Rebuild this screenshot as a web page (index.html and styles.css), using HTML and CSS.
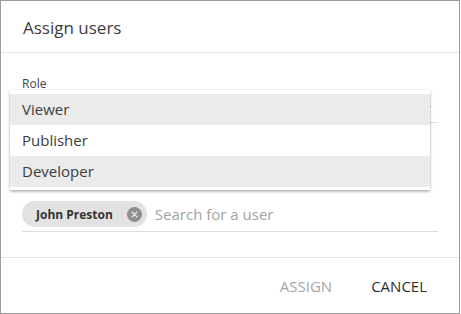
FILE: index.html
```html
<!DOCTYPE html>
<html lang="en">
<head>
  <meta charset="UTF-8" />
  <title>Assign users</title>
  <link rel="stylesheet" href="styles.css">
</head>
<body>
  <div class="dialog">
    <div class="dialog-header">
      <h2 class="dialog-title">Assign users</h2>
    </div>

    <div class="dialog-body">
      <div class="field">
        <label class="field-label">Role</label>
        <div class="select">
          <span class="select-arrow"></span>
        </div>

        <!-- open role menu -->
        <ul class="menu">
          <li class="menu-item active">Viewer</li>
          <li class="menu-item">Publisher</li>
          <li class="menu-item active">Developer</li>
        </ul>
      </div>

      <div class="chip-input">
        <span class="chip">
          John Preston
          <svg class="chip-close" width="15" height="15" viewBox="0 0 15 15">
            <circle cx="7.5" cy="7.5" r="7.5" fill="#8f8f8f"/>
            <path d="M5 5 L10 10 M10 5 L5 10" stroke="#e6e6e6" stroke-width="1.3" stroke-linecap="round"/>
          </svg>
        </span>
        <span class="search-placeholder">Search for a user</span>
      </div>
    </div>

    <div class="dialog-footer">
      <button class="btn btn-disabled">Assign</button>
      <button class="btn">Cancel</button>
    </div>
  </div>
</body>
</html>
```

FILE: styles.css
```css
body {
  font-family: "Open Sans", "Noto Sans", sans-serif;
  background: #ffffff;
  margin: 0;
  padding: 0;
}
.dialog {
  width: 458px;
  height: 312px;
  background: #ffffff;
  border: 1px solid #9c9c9c;
  display: flex;
  flex-direction: column;
}
.dialog-header {
  height: 52px;
  padding: 15px 22px 0;
  box-sizing: border-box;
  border-bottom: 1px solid #e4e4e4;
}
.dialog-title {
  margin: 0;
  font-size: 17px;
  line-height: 23px;
  font-weight: 400;
  color: #3d3d3d;
}
.dialog-body {
  padding: 0 21px 0 21px;
}
.field {
  position: relative;
  margin-top: 23px;
}
.field-label {
  display: block;
  font-size: 12px;
  line-height: 16px;
  color: #444;
}
.select {
  position: relative;
  height: 30px;
  border-bottom: 1px solid #dcdcdc;
}
.select-arrow {
  position: absolute;
  right: 7px;
  top: 14px;
  border-left: 5px solid transparent;
  border-right: 5px solid transparent;
  border-top: 5px solid #666;
}
.menu {
  position: absolute;
  top: 14px;
  left: -12px;
  width: 420px;
  margin: 0;
  padding: 4px 0 3px;
  list-style: none;
  background: #ffffff;
  box-shadow: 0 1px 3px rgba(0,0,0,0.25), 0 2px 2px rgba(0,0,0,0.12);
}
.menu-item {
  height: 31px;
  line-height: 31px;
  padding-left: 12px;
  font-size: 15px;
  color: #3d3d3d;
}
.menu-item.active {
  background: #ebebeb;
}
.chip-input {
  display: flex;
  align-items: center;
  gap: 8px;
  margin-top: 75px;
  padding: 3px 0 4px;
  border-bottom: 1px solid #dcdcdc;
}
.chip {
  display: inline-flex;
  align-items: center;
  height: 26px;
  padding: 0 5px 0 14px;
  border-radius: 13px;
  background: #e2e2e2;
  font-size: 12px;
  font-weight: 700;
  color: #333;
}
.chip-close {
  margin-left: 14px;
}
.search-placeholder {
  font-size: 15px;
  color: #a2a2a2;
}
.dialog-footer {
  margin-top: auto;
  height: 55px;
  border-top: 1px solid #e4e4e4;
  display: flex;
  justify-content: flex-end;
  align-items: center;
  gap: 23px;
  padding-right: 24px;
}
.btn {
  background: none;
  border: none;
  padding: 0 8px;
  font-family: inherit;
  font-size: 15px;
  text-transform: uppercase;
  color: #2e2e2e;
}
.btn-disabled {
  color: #a6a6a6;
}
```
